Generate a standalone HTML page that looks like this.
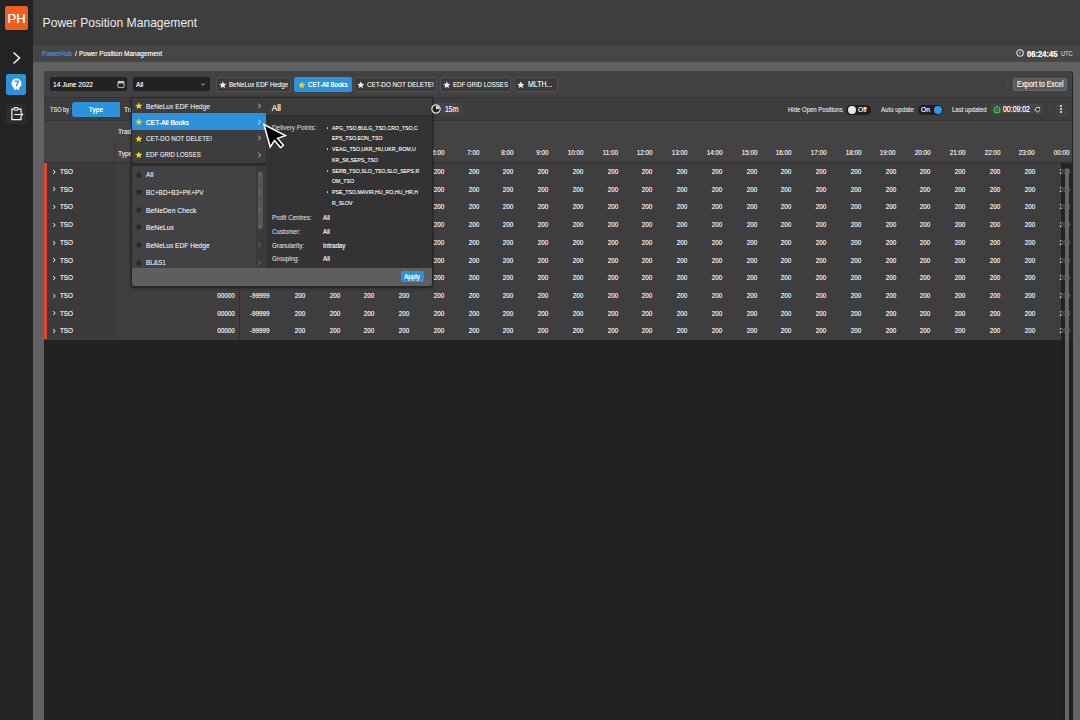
<!DOCTYPE html>
<html><head><meta charset="utf-8">
<style>
*{margin:0;padding:0;box-sizing:border-box}
html,body{width:1080px;height:720px;overflow:hidden;background:#232323;font-family:"Liberation Sans",sans-serif;color:#e6e6e6}
.a{position:absolute}
.t{position:absolute;white-space:nowrap;line-height:1;text-shadow:0 0 0.25px}
</style></head><body>
<div class="a" style="left:0px;top:0px;width:33px;height:720px;background:#232323;"></div>
<div class="a" style="left:33px;top:0px;width:1047px;height:44px;background:#3e3e3e;"></div>
<div class="a" style="left:33px;top:44px;width:1047px;height:18px;background:#474647;"></div>
<div class="a" style="left:33px;top:44px;width:1047px;height:1px;background:#3a3a3a;"></div>
<div class="a" style="left:33px;top:62px;width:1047px;height:658px;background:#626262;"></div>
<div class="a" style="left:44px;top:71px;width:1029px;height:649px;background:#222222;border-radius:3px 3px 0 0"></div>
<div class="a" style="left:44px;top:71px;width:1028px;height:26px;background:#434243;border-radius:3px 3px 0 0"></div>
<div class="a" style="left:44px;top:97px;width:1028px;height:24px;background:#3d3d3d;"></div>
<div class="a" style="left:44px;top:97px;width:1028px;height:1px;background:#343434;"></div>
<div class="a" style="left:44px;top:120px;width:1028px;height:1px;background:#343434;"></div>
<div class="a" style="left:44px;top:121px;width:1028px;height:42px;background:#444344;"></div>
<div class="a" style="left:44px;top:162px;width:1028px;height:1.6px;background:#323232;"></div>
<div class="a" style="left:44px;top:163px;width:1017px;height:176.5px;background:#3e3e3e;"></div>
<div class="a" style="left:47px;top:163px;width:67px;height:176.5px;background:#3b3b3b;"></div>
<div class="a" style="left:5px;top:6px;width:23px;height:24px;background:#f35d1f;border-radius:2px;box-shadow:0 0 0 1px #18232a"></div>
<div class="t" style="left:-33.50px;width:100px;top:12.00px;text-align:center;transform-origin:50% 0;font-size:13.00px;color:#ffffff;">PH</div>
<svg class="a" style="left:11px;top:51px" width="11" height="14" viewBox="0 0 11 14"><path d="M2.5 1.5 L8.5 7 L2.5 12.5" fill="none" stroke="#f0f0f0" stroke-width="1.6"/></svg>
<div class="a" style="left:6px;top:74px;width:20px;height:21px;background:#2b92db;border-radius:2px"></div>
<svg class="a" style="left:10px;top:77px" width="13" height="15" viewBox="0 0 13 15"><circle cx="6.5" cy="6.5" r="5" fill="#fff"/><path d="M3.5 10 L4.5 13.5 L6.5 11.5 L8.5 13.5 L9.5 10Z" fill="#fff"/><path d="M4.6 4.2 H8.4 L6.2 9.2" fill="none" stroke="#2d8fd6" stroke-width="1.3"/></svg>
<div class="a" style="left:6px;top:104px;width:20px;height:20px;background:#2c2c2c;border-radius:2px"></div>
<svg class="a" style="left:0px;top:100px" width="33" height="30" viewBox="0 100 33 30"><path d="M14 109.2 H11.9 V119.5 H21 V116.6 M21 112.4 V109.2 H18" fill="none" stroke="#f2f2f2" stroke-width="1.25"/><rect x="14.2" y="107.6" width="3.6" height="2.6" rx="0.6" fill="none" stroke="#f2f2f2" stroke-width="1.1"/><path d="M14.2 114.5 H22.6 M20.8 112.7 L22.7 114.5 L20.8 116.3" fill="none" stroke="#f2f2f2" stroke-width="1.15"/></svg>
<div class="t" style="left:42.60px;top:17.00px;transform-origin:0 0;font-size:12.10px;color:#ececec;text-shadow:none">Power Position Management</div>
<div class="t" style="left:41.60px;top:50.00px;transform:scaleX(0.8475);transform-origin:0 0;font-size:7.55px;color:#3d8fd1;">PowerHub</div>
<div class="t" style="left:74.50px;top:50.00px;transform:scaleX(0.8475);transform-origin:0 0;font-size:7.67px;color:#e6e6e6;">/</div>
<div class="t" style="left:79.00px;top:50.00px;transform:scaleX(0.8475);transform-origin:0 0;font-size:7.67px;color:#e6e6e6;">Power Position Management</div>
<svg class="a" style="left:1015px;top:48px" width="10" height="10" viewBox="0 0 10 10"><circle cx="5" cy="5" r="3.2" fill="none" stroke="#e4e4e4" stroke-width="1.1"/><path d="M5 3.4 V5.1 L4.2 5.9" fill="none" stroke="#e4e4e4" stroke-width="0.8"/></svg>
<div class="t" style="left:1027.00px;top:50.00px;transform:scaleX(0.8929);transform-origin:0 0;font-size:8.53px;color:#f2f2f2;font-weight:bold">06:24:45</div>
<div class="t" style="left:1061.00px;top:51.00px;transform:scaleX(0.8475);transform-origin:0 0;font-size:6.60px;color:#bdbdbd;">UTC</div>
<div class="a" style="left:50px;top:77px;width:77px;height:14px;background:#222222;border-radius:2px"></div>
<div class="t" style="left:53.00px;top:81.00px;transform:scaleX(0.8475);transform-origin:0 0;font-size:7.79px;color:#e0e0e0;">14 June 2022</div>
<svg class="a" style="left:116.5px;top:80px" width="8" height="9" viewBox="0 0 8 9"><rect x="0.9" y="1.6" width="6.2" height="6" rx="0.8" fill="none" stroke="#cfcfcf" stroke-width="0.9"/><rect x="0.9" y="1.6" width="6.2" height="1.8" fill="#cfcfcf"/><path d="M2.5 0.6 V2.2 M5.5 0.6 V2.2" stroke="#cfcfcf" stroke-width="0.8"/></svg>
<div class="a" style="left:132.5px;top:77px;width:77px;height:14px;background:#222222;border-radius:2px"></div>
<div class="t" style="left:136.00px;top:81.00px;transform:scaleX(0.8475);transform-origin:0 0;font-size:7.79px;color:#e0e0e0;">All</div>
<svg class="a" style="left:199.5px;top:81.5px" width="6" height="5" viewBox="0 0 6 5"><path d="M1.3 1.5 L3 3.2 L4.7 1.5" fill="none" stroke="#d0d0d0" stroke-width="0.9"/></svg>
<div class="a" style="left:215.5px;top:77px;width:75.5px;height:15px;background:#3b3b3b;border-radius:2px;border:1px solid #525252"></div>
<svg class="a" style="left:218.60px;top:80.60px" width="7.60" height="7.60" viewBox="0 0 8 8"><path d="M4 0.3 L5.05 2.9 L7.8 3.05 L5.7 4.8 L6.35 7.5 L4 6 L1.65 7.5 L2.3 4.8 L0.2 3.05 L2.95 2.9Z" fill="#f0f0f0"/></svg>
<div class="t" style="left:228.80px;top:81.00px;transform:scaleX(0.8475);transform-origin:0 0;font-size:7.28px;color:#dadada;">BeNeLux EDF Hedge</div>
<div class="a" style="left:294px;top:77px;width:57.69999999999999px;height:15px;background:#2b92db;border-radius:2px"></div>
<svg class="a" style="left:297.50px;top:80.60px" width="7.60" height="7.60" viewBox="0 0 8 8"><path d="M4 0.3 L5.05 2.9 L7.8 3.05 L5.7 4.8 L6.35 7.5 L4 6 L1.65 7.5 L2.3 4.8 L0.2 3.05 L2.95 2.9Z" fill="#f5d21e"/></svg>
<div class="t" style="left:308.20px;top:81.00px;transform:scaleX(0.8475);transform-origin:0 0;font-size:7.23px;color:#ffffff;">CET-All Books</div>
<div class="a" style="left:354px;top:77px;width:82.69999999999999px;height:15px;background:#3b3b3b;border-radius:2px;border:1px solid #525252"></div>
<svg class="a" style="left:357.10px;top:80.60px" width="7.60" height="7.60" viewBox="0 0 8 8"><path d="M4 0.3 L5.05 2.9 L7.8 3.05 L5.7 4.8 L6.35 7.5 L4 6 L1.65 7.5 L2.3 4.8 L0.2 3.05 L2.95 2.9Z" fill="#f0f0f0"/></svg>
<div class="t" style="left:367.30px;top:81.00px;transform:scaleX(0.8475);transform-origin:0 0;font-size:7.45px;color:#dadada;">CET-DO NOT DELETE!</div>
<div class="a" style="left:440px;top:77px;width:71px;height:15px;background:#3b3b3b;border-radius:2px;border:1px solid #525252"></div>
<svg class="a" style="left:443.10px;top:80.60px" width="7.60" height="7.60" viewBox="0 0 8 8"><path d="M4 0.3 L5.05 2.9 L7.8 3.05 L5.7 4.8 L6.35 7.5 L4 6 L1.65 7.5 L2.3 4.8 L0.2 3.05 L2.95 2.9Z" fill="#f0f0f0"/></svg>
<div class="t" style="left:453.30px;top:82.00px;transform:scaleX(0.8475);transform-origin:0 0;font-size:7.17px;color:#dadada;">EDF GRID LOSSES</div>
<div class="a" style="left:514.3px;top:77px;width:43.40000000000009px;height:15px;background:#3b3b3b;border-radius:2px;border:1px solid #525252"></div>
<svg class="a" style="left:517.40px;top:80.60px" width="7.60" height="7.60" viewBox="0 0 8 8"><path d="M4 0.3 L5.05 2.9 L7.8 3.05 L5.7 4.8 L6.35 7.5 L4 6 L1.65 7.5 L2.3 4.8 L0.2 3.05 L2.95 2.9Z" fill="#f0f0f0"/></svg>
<div class="t" style="left:527.60px;top:81.00px;transform:scaleX(0.8475);transform-origin:0 0;font-size:8.24px;color:#dadada;">MLTH...</div>
<div class="a" style="left:1007px;top:79px;width:1px;height:11px;background:#4a4a4a;"></div>
<div class="a" style="left:1013px;top:77.5px;width:53.5px;height:13.5px;background:#5a5a5a;border-radius:2px;border:1px solid #686868"></div>
<div class="t" style="left:1016.50px;top:81.00px;transform:scaleX(0.8475);transform-origin:0 0;font-size:8.20px;color:#e4e4e4;">Export to Excel</div>
<div class="t" style="left:50.00px;top:106.00px;transform:scaleX(0.8000);transform-origin:0 0;font-size:7.00px;color:#d0d0d0;">TSO by</div>
<div class="a" style="left:72.2px;top:102.2px;width:48px;height:14.5px;background:#2b92db;border-radius:3px 0 0 3px"></div>
<div class="t" style="left:46.20px;width:100px;top:106.00px;text-align:center;transform:scaleX(0.8475);transform-origin:50% 0;font-size:7.79px;color:#ffffff;">Type</div>
<div class="t" style="left:124.00px;top:106.00px;transform:scaleX(0.8475);transform-origin:0 0;font-size:7.79px;color:#d0d0d0;">Trade</div>
<div class="a" style="left:433px;top:102.8px;width:30px;height:12.7px;background:#444444;border-radius:2px"></div>
<div class="t" style="left:444.70px;top:106.00px;transform:scaleX(0.8475);transform-origin:0 0;font-size:8.14px;color:#e0e0e0;">15m</div>
<div class="t" style="left:788.00px;top:107.00px;transform:scaleX(0.8475);transform-origin:0 0;font-size:7.08px;color:#cfcfcf;">Hide Open Positions</div>
<div class="a" style="left:846px;top:104.8px;width:25.4px;height:10px;background:#1f1f1f;border-radius:5px"></div>
<div class="a" style="left:848px;top:105.8px;width:8px;height:8px;border-radius:50%;background:#e8e8e8"></div>
<div class="t" style="left:858.00px;top:106.00px;transform:scaleX(0.8475);transform-origin:0 0;font-size:7.79px;color:#f0f0f0;">Off</div>
<div class="t" style="left:881.00px;top:106.00px;transform:scaleX(0.8475);transform-origin:0 0;font-size:7.20px;color:#cfcfcf;">Auto update</div>
<div class="a" style="left:917.8px;top:104.8px;width:25.1px;height:10px;background:#1f1f1f;border-radius:5px"></div>
<div class="a" style="left:933.6px;top:105.8px;width:8px;height:8px;border-radius:50%;background:#2d9ae8"></div>
<div class="t" style="left:921.00px;top:106.00px;transform:scaleX(0.8475);transform-origin:0 0;font-size:7.79px;color:#f0f0f0;">On</div>
<div class="t" style="left:952.40px;top:106.00px;transform:scaleX(0.8475);transform-origin:0 0;font-size:7.06px;color:#cfcfcf;">Last updated</div>
<div class="a" style="left:990.6px;top:103.8px;width:52.4px;height:10.6px;background:#454545;border-radius:2px"></div>
<svg class="a" style="left:992px;top:104px" width="10" height="11" viewBox="0 0 10 11"><circle cx="5" cy="5.9" r="2.9" fill="none" stroke="#52c23e" stroke-width="1.1"/><path d="M5 1.6 V3" stroke="#52c23e" stroke-width="1.1"/><path d="M4.3 4.6 L6.4 5.9 L4.3 7.2Z" fill="#52c23e"/></svg>
<div class="t" style="left:1003.00px;top:106.00px;transform:scaleX(0.8475);transform-origin:0 0;font-size:8.19px;color:#f2f2f2;text-shadow:0 0 0.4px">00:09:02</div>
<svg class="a" style="left:1034px;top:106px" width="7" height="7" viewBox="0 0 7 7"><path d="M5.3 2.1 A2.3 2.3 0 1 0 5.8 4.1" fill="none" stroke="#e0e0e0" stroke-width="1"/><path d="M4.3 1 L6.2 1.1 L5.9 3Z" fill="#e0e0e0"/></svg>
<div class="a" style="left:1049px;top:104px;width:1px;height:10px;background:#474747;"></div>
<div class="a" style="left:1056px;top:103px;width:11px;height:13px;background:#424242;border-radius:2px"></div>
<div class="a" style="left:1060.3px;top:105.3px;width:1.8px;height:1.8px;border-radius:50%;background:#f0f0f0"></div>
<div class="a" style="left:1060.3px;top:108.3px;width:1.8px;height:1.8px;border-radius:50%;background:#f0f0f0"></div>
<div class="a" style="left:1060.3px;top:111.3px;width:1.8px;height:1.8px;border-radius:50%;background:#f0f0f0"></div>
<div class="t" style="left:117.80px;top:128.00px;transform:scaleX(0.8475);transform-origin:0 0;font-size:7.79px;color:#d6d6d6;">Trade</div>
<div class="t" style="left:117.80px;top:150.00px;transform:scaleX(0.8475);transform-origin:0 0;font-size:7.79px;color:#d6d6d6;">Type</div>
<div class="a" style="left:114px;top:140.5px;width:1px;height:22px;background:#383838;"></div>
<div class="t" style="right:774.55px;top:149.00px;text-align:right;transform:scaleX(0.8475);transform-origin:100% 0;font-size:7.43px;color:#e2e2e2;">2:00</div>
<div class="t" style="right:739.81px;top:149.00px;text-align:right;transform:scaleX(0.8475);transform-origin:100% 0;font-size:7.43px;color:#e2e2e2;">3:00</div>
<div class="t" style="right:705.07px;top:149.00px;text-align:right;transform:scaleX(0.8475);transform-origin:100% 0;font-size:7.43px;color:#e2e2e2;">4:00</div>
<div class="t" style="right:670.33px;top:149.00px;text-align:right;transform:scaleX(0.8475);transform-origin:100% 0;font-size:7.43px;color:#e2e2e2;">5:00</div>
<div class="t" style="right:635.59px;top:149.00px;text-align:right;transform:scaleX(0.8475);transform-origin:100% 0;font-size:7.43px;color:#e2e2e2;">6:00</div>
<div class="t" style="right:600.85px;top:149.00px;text-align:right;transform:scaleX(0.8475);transform-origin:100% 0;font-size:7.43px;color:#e2e2e2;">7:00</div>
<div class="t" style="right:566.11px;top:149.00px;text-align:right;transform:scaleX(0.8475);transform-origin:100% 0;font-size:7.43px;color:#e2e2e2;">8:00</div>
<div class="t" style="right:531.37px;top:149.00px;text-align:right;transform:scaleX(0.8475);transform-origin:100% 0;font-size:7.43px;color:#e2e2e2;">9:00</div>
<div class="t" style="right:496.63px;top:149.00px;text-align:right;transform:scaleX(0.8475);transform-origin:100% 0;font-size:7.43px;color:#e2e2e2;">10:00</div>
<div class="t" style="right:461.89px;top:149.00px;text-align:right;transform:scaleX(0.8475);transform-origin:100% 0;font-size:7.43px;color:#e2e2e2;">11:00</div>
<div class="t" style="right:427.15px;top:149.00px;text-align:right;transform:scaleX(0.8475);transform-origin:100% 0;font-size:7.43px;color:#e2e2e2;">12:00</div>
<div class="t" style="right:392.41px;top:149.00px;text-align:right;transform:scaleX(0.8475);transform-origin:100% 0;font-size:7.43px;color:#e2e2e2;">13:00</div>
<div class="t" style="right:357.67px;top:149.00px;text-align:right;transform:scaleX(0.8475);transform-origin:100% 0;font-size:7.43px;color:#e2e2e2;">14:00</div>
<div class="t" style="right:322.93px;top:149.00px;text-align:right;transform:scaleX(0.8475);transform-origin:100% 0;font-size:7.43px;color:#e2e2e2;">15:00</div>
<div class="t" style="right:288.19px;top:149.00px;text-align:right;transform:scaleX(0.8475);transform-origin:100% 0;font-size:7.43px;color:#e2e2e2;">16:00</div>
<div class="t" style="right:253.45px;top:149.00px;text-align:right;transform:scaleX(0.8475);transform-origin:100% 0;font-size:7.43px;color:#e2e2e2;">17:00</div>
<div class="t" style="right:218.71px;top:149.00px;text-align:right;transform:scaleX(0.8475);transform-origin:100% 0;font-size:7.43px;color:#e2e2e2;">18:00</div>
<div class="t" style="right:183.97px;top:149.00px;text-align:right;transform:scaleX(0.8475);transform-origin:100% 0;font-size:7.43px;color:#e2e2e2;">19:00</div>
<div class="t" style="right:149.23px;top:149.00px;text-align:right;transform:scaleX(0.8475);transform-origin:100% 0;font-size:7.43px;color:#e2e2e2;">20:00</div>
<div class="t" style="right:114.49px;top:149.00px;text-align:right;transform:scaleX(0.8475);transform-origin:100% 0;font-size:7.43px;color:#e2e2e2;">21:00</div>
<div class="t" style="right:79.75px;top:149.00px;text-align:right;transform:scaleX(0.8475);transform-origin:100% 0;font-size:7.43px;color:#e2e2e2;">22:00</div>
<div class="t" style="right:45.01px;top:149.00px;text-align:right;transform:scaleX(0.8475);transform-origin:100% 0;font-size:7.43px;color:#e2e2e2;">23:00</div>
<div class="t" style="right:10.27px;top:149.00px;text-align:right;transform:scaleX(0.8475);transform-origin:100% 0;font-size:7.43px;color:#e2e2e2;">00:00</div>
<div class="a" style="left:44px;top:163px;width:3px;height:176px;background:#e8432e;"></div>
<div class="a" style="left:114px;top:163px;width:1px;height:176px;background:#383838;"></div>
<div class="a" style="left:239px;top:163px;width:1px;height:176px;background:#2e2e2e;"></div>
<svg class="a" style="left:51.5px;top:168.70px" width="5" height="6" viewBox="0 0 5 6"><path d="M1.2 1 L3.2 3 L1.2 5" fill="none" stroke="#f0f0f0" stroke-width="1"/></svg>
<div class="t" style="left:60.00px;top:168.00px;transform:scaleX(0.8475);transform-origin:0 0;font-size:7.43px;color:#e6e6e6;">TSO</div>
<div class="t" style="right:845.10px;top:168.00px;text-align:right;transform:scaleX(0.8475);transform-origin:100% 0;font-size:7.43px;color:#e6e6e6;">00000</div>
<div class="t" style="left:250.10px;top:168.00px;transform:scaleX(0.8475);transform-origin:0 0;font-size:7.43px;color:#e6e6e6;">-99999</div>
<div class="t" style="left:249.80px;width:100px;top:168.00px;text-align:center;transform:scaleX(0.8475);transform-origin:50% 0;font-size:7.43px;color:#e6e6e6;">200</div>
<div class="t" style="left:284.56px;width:100px;top:168.00px;text-align:center;transform:scaleX(0.8475);transform-origin:50% 0;font-size:7.43px;color:#e6e6e6;">200</div>
<div class="t" style="left:319.32px;width:100px;top:168.00px;text-align:center;transform:scaleX(0.8475);transform-origin:50% 0;font-size:7.43px;color:#e6e6e6;">200</div>
<div class="t" style="left:354.08px;width:100px;top:168.00px;text-align:center;transform:scaleX(0.8475);transform-origin:50% 0;font-size:7.43px;color:#e6e6e6;">200</div>
<div class="t" style="left:388.84px;width:100px;top:168.00px;text-align:center;transform:scaleX(0.8475);transform-origin:50% 0;font-size:7.43px;color:#e6e6e6;">200</div>
<div class="t" style="left:423.60px;width:100px;top:168.00px;text-align:center;transform:scaleX(0.8475);transform-origin:50% 0;font-size:7.43px;color:#e6e6e6;">200</div>
<div class="t" style="left:458.36px;width:100px;top:168.00px;text-align:center;transform:scaleX(0.8475);transform-origin:50% 0;font-size:7.43px;color:#e6e6e6;">200</div>
<div class="t" style="left:493.12px;width:100px;top:168.00px;text-align:center;transform:scaleX(0.8475);transform-origin:50% 0;font-size:7.43px;color:#e6e6e6;">200</div>
<div class="t" style="left:527.88px;width:100px;top:168.00px;text-align:center;transform:scaleX(0.8475);transform-origin:50% 0;font-size:7.43px;color:#e6e6e6;">200</div>
<div class="t" style="left:562.64px;width:100px;top:168.00px;text-align:center;transform:scaleX(0.8475);transform-origin:50% 0;font-size:7.43px;color:#e6e6e6;">200</div>
<div class="t" style="left:597.40px;width:100px;top:168.00px;text-align:center;transform:scaleX(0.8475);transform-origin:50% 0;font-size:7.43px;color:#e6e6e6;">200</div>
<div class="t" style="left:632.16px;width:100px;top:168.00px;text-align:center;transform:scaleX(0.8475);transform-origin:50% 0;font-size:7.43px;color:#e6e6e6;">200</div>
<div class="t" style="left:666.92px;width:100px;top:168.00px;text-align:center;transform:scaleX(0.8475);transform-origin:50% 0;font-size:7.43px;color:#e6e6e6;">200</div>
<div class="t" style="left:701.68px;width:100px;top:168.00px;text-align:center;transform:scaleX(0.8475);transform-origin:50% 0;font-size:7.43px;color:#e6e6e6;">200</div>
<div class="t" style="left:736.44px;width:100px;top:168.00px;text-align:center;transform:scaleX(0.8475);transform-origin:50% 0;font-size:7.43px;color:#e6e6e6;">200</div>
<div class="t" style="left:771.20px;width:100px;top:168.00px;text-align:center;transform:scaleX(0.8475);transform-origin:50% 0;font-size:7.43px;color:#e6e6e6;">200</div>
<div class="t" style="left:805.96px;width:100px;top:168.00px;text-align:center;transform:scaleX(0.8475);transform-origin:50% 0;font-size:7.43px;color:#e6e6e6;">200</div>
<div class="t" style="left:840.72px;width:100px;top:168.00px;text-align:center;transform:scaleX(0.8475);transform-origin:50% 0;font-size:7.43px;color:#e6e6e6;">200</div>
<div class="t" style="left:875.48px;width:100px;top:168.00px;text-align:center;transform:scaleX(0.8475);transform-origin:50% 0;font-size:7.43px;color:#e6e6e6;">200</div>
<div class="t" style="left:910.24px;width:100px;top:168.00px;text-align:center;transform:scaleX(0.8475);transform-origin:50% 0;font-size:7.43px;color:#e6e6e6;">200</div>
<div class="t" style="left:945.00px;width:100px;top:168.00px;text-align:center;transform:scaleX(0.8475);transform-origin:50% 0;font-size:7.43px;color:#e6e6e6;">200</div>
<div class="t" style="left:979.76px;width:100px;top:168.00px;text-align:center;transform:scaleX(0.8475);transform-origin:50% 0;font-size:7.43px;color:#e6e6e6;">200</div>
<div class="t" style="left:1014.52px;width:100px;top:168.00px;text-align:center;transform:scaleX(0.8475);transform-origin:50% 0;font-size:7.43px;color:#e6e6e6;">200</div>
<svg class="a" style="left:51.5px;top:186.42px" width="5" height="6" viewBox="0 0 5 6"><path d="M1.2 1 L3.2 3 L1.2 5" fill="none" stroke="#f0f0f0" stroke-width="1"/></svg>
<div class="t" style="left:60.00px;top:186.00px;transform:scaleX(0.8475);transform-origin:0 0;font-size:7.43px;color:#e6e6e6;">TSO</div>
<div class="t" style="right:845.10px;top:186.00px;text-align:right;transform:scaleX(0.8475);transform-origin:100% 0;font-size:7.43px;color:#e6e6e6;">00000</div>
<div class="t" style="left:250.10px;top:186.00px;transform:scaleX(0.8475);transform-origin:0 0;font-size:7.43px;color:#e6e6e6;">-99999</div>
<div class="t" style="left:249.80px;width:100px;top:186.00px;text-align:center;transform:scaleX(0.8475);transform-origin:50% 0;font-size:7.43px;color:#e6e6e6;">200</div>
<div class="t" style="left:284.56px;width:100px;top:186.00px;text-align:center;transform:scaleX(0.8475);transform-origin:50% 0;font-size:7.43px;color:#e6e6e6;">200</div>
<div class="t" style="left:319.32px;width:100px;top:186.00px;text-align:center;transform:scaleX(0.8475);transform-origin:50% 0;font-size:7.43px;color:#e6e6e6;">200</div>
<div class="t" style="left:354.08px;width:100px;top:186.00px;text-align:center;transform:scaleX(0.8475);transform-origin:50% 0;font-size:7.43px;color:#e6e6e6;">200</div>
<div class="t" style="left:388.84px;width:100px;top:186.00px;text-align:center;transform:scaleX(0.8475);transform-origin:50% 0;font-size:7.43px;color:#e6e6e6;">200</div>
<div class="t" style="left:423.60px;width:100px;top:186.00px;text-align:center;transform:scaleX(0.8475);transform-origin:50% 0;font-size:7.43px;color:#e6e6e6;">200</div>
<div class="t" style="left:458.36px;width:100px;top:186.00px;text-align:center;transform:scaleX(0.8475);transform-origin:50% 0;font-size:7.43px;color:#e6e6e6;">200</div>
<div class="t" style="left:493.12px;width:100px;top:186.00px;text-align:center;transform:scaleX(0.8475);transform-origin:50% 0;font-size:7.43px;color:#e6e6e6;">200</div>
<div class="t" style="left:527.88px;width:100px;top:186.00px;text-align:center;transform:scaleX(0.8475);transform-origin:50% 0;font-size:7.43px;color:#e6e6e6;">200</div>
<div class="t" style="left:562.64px;width:100px;top:186.00px;text-align:center;transform:scaleX(0.8475);transform-origin:50% 0;font-size:7.43px;color:#e6e6e6;">200</div>
<div class="t" style="left:597.40px;width:100px;top:186.00px;text-align:center;transform:scaleX(0.8475);transform-origin:50% 0;font-size:7.43px;color:#e6e6e6;">200</div>
<div class="t" style="left:632.16px;width:100px;top:186.00px;text-align:center;transform:scaleX(0.8475);transform-origin:50% 0;font-size:7.43px;color:#e6e6e6;">200</div>
<div class="t" style="left:666.92px;width:100px;top:186.00px;text-align:center;transform:scaleX(0.8475);transform-origin:50% 0;font-size:7.43px;color:#e6e6e6;">200</div>
<div class="t" style="left:701.68px;width:100px;top:186.00px;text-align:center;transform:scaleX(0.8475);transform-origin:50% 0;font-size:7.43px;color:#e6e6e6;">200</div>
<div class="t" style="left:736.44px;width:100px;top:186.00px;text-align:center;transform:scaleX(0.8475);transform-origin:50% 0;font-size:7.43px;color:#e6e6e6;">200</div>
<div class="t" style="left:771.20px;width:100px;top:186.00px;text-align:center;transform:scaleX(0.8475);transform-origin:50% 0;font-size:7.43px;color:#e6e6e6;">200</div>
<div class="t" style="left:805.96px;width:100px;top:186.00px;text-align:center;transform:scaleX(0.8475);transform-origin:50% 0;font-size:7.43px;color:#e6e6e6;">200</div>
<div class="t" style="left:840.72px;width:100px;top:186.00px;text-align:center;transform:scaleX(0.8475);transform-origin:50% 0;font-size:7.43px;color:#e6e6e6;">200</div>
<div class="t" style="left:875.48px;width:100px;top:186.00px;text-align:center;transform:scaleX(0.8475);transform-origin:50% 0;font-size:7.43px;color:#e6e6e6;">200</div>
<div class="t" style="left:910.24px;width:100px;top:186.00px;text-align:center;transform:scaleX(0.8475);transform-origin:50% 0;font-size:7.43px;color:#e6e6e6;">200</div>
<div class="t" style="left:945.00px;width:100px;top:186.00px;text-align:center;transform:scaleX(0.8475);transform-origin:50% 0;font-size:7.43px;color:#e6e6e6;">200</div>
<div class="t" style="left:979.76px;width:100px;top:186.00px;text-align:center;transform:scaleX(0.8475);transform-origin:50% 0;font-size:7.43px;color:#e6e6e6;">200</div>
<div class="t" style="left:1014.52px;width:100px;top:186.00px;text-align:center;transform:scaleX(0.8475);transform-origin:50% 0;font-size:7.43px;color:#e6e6e6;">200</div>
<svg class="a" style="left:51.5px;top:204.14px" width="5" height="6" viewBox="0 0 5 6"><path d="M1.2 1 L3.2 3 L1.2 5" fill="none" stroke="#f0f0f0" stroke-width="1"/></svg>
<div class="t" style="left:60.00px;top:203.00px;transform:scaleX(0.8475);transform-origin:0 0;font-size:7.43px;color:#e6e6e6;">TSO</div>
<div class="t" style="right:845.10px;top:203.00px;text-align:right;transform:scaleX(0.8475);transform-origin:100% 0;font-size:7.43px;color:#e6e6e6;">00000</div>
<div class="t" style="left:250.10px;top:203.00px;transform:scaleX(0.8475);transform-origin:0 0;font-size:7.43px;color:#e6e6e6;">-99999</div>
<div class="t" style="left:249.80px;width:100px;top:203.00px;text-align:center;transform:scaleX(0.8475);transform-origin:50% 0;font-size:7.43px;color:#e6e6e6;">200</div>
<div class="t" style="left:284.56px;width:100px;top:203.00px;text-align:center;transform:scaleX(0.8475);transform-origin:50% 0;font-size:7.43px;color:#e6e6e6;">200</div>
<div class="t" style="left:319.32px;width:100px;top:203.00px;text-align:center;transform:scaleX(0.8475);transform-origin:50% 0;font-size:7.43px;color:#e6e6e6;">200</div>
<div class="t" style="left:354.08px;width:100px;top:203.00px;text-align:center;transform:scaleX(0.8475);transform-origin:50% 0;font-size:7.43px;color:#e6e6e6;">200</div>
<div class="t" style="left:388.84px;width:100px;top:203.00px;text-align:center;transform:scaleX(0.8475);transform-origin:50% 0;font-size:7.43px;color:#e6e6e6;">200</div>
<div class="t" style="left:423.60px;width:100px;top:203.00px;text-align:center;transform:scaleX(0.8475);transform-origin:50% 0;font-size:7.43px;color:#e6e6e6;">200</div>
<div class="t" style="left:458.36px;width:100px;top:203.00px;text-align:center;transform:scaleX(0.8475);transform-origin:50% 0;font-size:7.43px;color:#e6e6e6;">200</div>
<div class="t" style="left:493.12px;width:100px;top:203.00px;text-align:center;transform:scaleX(0.8475);transform-origin:50% 0;font-size:7.43px;color:#e6e6e6;">200</div>
<div class="t" style="left:527.88px;width:100px;top:203.00px;text-align:center;transform:scaleX(0.8475);transform-origin:50% 0;font-size:7.43px;color:#e6e6e6;">200</div>
<div class="t" style="left:562.64px;width:100px;top:203.00px;text-align:center;transform:scaleX(0.8475);transform-origin:50% 0;font-size:7.43px;color:#e6e6e6;">200</div>
<div class="t" style="left:597.40px;width:100px;top:203.00px;text-align:center;transform:scaleX(0.8475);transform-origin:50% 0;font-size:7.43px;color:#e6e6e6;">200</div>
<div class="t" style="left:632.16px;width:100px;top:203.00px;text-align:center;transform:scaleX(0.8475);transform-origin:50% 0;font-size:7.43px;color:#e6e6e6;">200</div>
<div class="t" style="left:666.92px;width:100px;top:203.00px;text-align:center;transform:scaleX(0.8475);transform-origin:50% 0;font-size:7.43px;color:#e6e6e6;">200</div>
<div class="t" style="left:701.68px;width:100px;top:203.00px;text-align:center;transform:scaleX(0.8475);transform-origin:50% 0;font-size:7.43px;color:#e6e6e6;">200</div>
<div class="t" style="left:736.44px;width:100px;top:203.00px;text-align:center;transform:scaleX(0.8475);transform-origin:50% 0;font-size:7.43px;color:#e6e6e6;">200</div>
<div class="t" style="left:771.20px;width:100px;top:203.00px;text-align:center;transform:scaleX(0.8475);transform-origin:50% 0;font-size:7.43px;color:#e6e6e6;">200</div>
<div class="t" style="left:805.96px;width:100px;top:203.00px;text-align:center;transform:scaleX(0.8475);transform-origin:50% 0;font-size:7.43px;color:#e6e6e6;">200</div>
<div class="t" style="left:840.72px;width:100px;top:203.00px;text-align:center;transform:scaleX(0.8475);transform-origin:50% 0;font-size:7.43px;color:#e6e6e6;">200</div>
<div class="t" style="left:875.48px;width:100px;top:203.00px;text-align:center;transform:scaleX(0.8475);transform-origin:50% 0;font-size:7.43px;color:#e6e6e6;">200</div>
<div class="t" style="left:910.24px;width:100px;top:203.00px;text-align:center;transform:scaleX(0.8475);transform-origin:50% 0;font-size:7.43px;color:#e6e6e6;">200</div>
<div class="t" style="left:945.00px;width:100px;top:203.00px;text-align:center;transform:scaleX(0.8475);transform-origin:50% 0;font-size:7.43px;color:#e6e6e6;">200</div>
<div class="t" style="left:979.76px;width:100px;top:203.00px;text-align:center;transform:scaleX(0.8475);transform-origin:50% 0;font-size:7.43px;color:#e6e6e6;">200</div>
<div class="t" style="left:1014.52px;width:100px;top:203.00px;text-align:center;transform:scaleX(0.8475);transform-origin:50% 0;font-size:7.43px;color:#e6e6e6;">200</div>
<svg class="a" style="left:51.5px;top:221.86px" width="5" height="6" viewBox="0 0 5 6"><path d="M1.2 1 L3.2 3 L1.2 5" fill="none" stroke="#f0f0f0" stroke-width="1"/></svg>
<div class="t" style="left:60.00px;top:221.00px;transform:scaleX(0.8475);transform-origin:0 0;font-size:7.43px;color:#e6e6e6;">TSO</div>
<div class="t" style="right:845.10px;top:221.00px;text-align:right;transform:scaleX(0.8475);transform-origin:100% 0;font-size:7.43px;color:#e6e6e6;">00000</div>
<div class="t" style="left:250.10px;top:221.00px;transform:scaleX(0.8475);transform-origin:0 0;font-size:7.43px;color:#e6e6e6;">-99999</div>
<div class="t" style="left:249.80px;width:100px;top:221.00px;text-align:center;transform:scaleX(0.8475);transform-origin:50% 0;font-size:7.43px;color:#e6e6e6;">200</div>
<div class="t" style="left:284.56px;width:100px;top:221.00px;text-align:center;transform:scaleX(0.8475);transform-origin:50% 0;font-size:7.43px;color:#e6e6e6;">200</div>
<div class="t" style="left:319.32px;width:100px;top:221.00px;text-align:center;transform:scaleX(0.8475);transform-origin:50% 0;font-size:7.43px;color:#e6e6e6;">200</div>
<div class="t" style="left:354.08px;width:100px;top:221.00px;text-align:center;transform:scaleX(0.8475);transform-origin:50% 0;font-size:7.43px;color:#e6e6e6;">200</div>
<div class="t" style="left:388.84px;width:100px;top:221.00px;text-align:center;transform:scaleX(0.8475);transform-origin:50% 0;font-size:7.43px;color:#e6e6e6;">200</div>
<div class="t" style="left:423.60px;width:100px;top:221.00px;text-align:center;transform:scaleX(0.8475);transform-origin:50% 0;font-size:7.43px;color:#e6e6e6;">200</div>
<div class="t" style="left:458.36px;width:100px;top:221.00px;text-align:center;transform:scaleX(0.8475);transform-origin:50% 0;font-size:7.43px;color:#e6e6e6;">200</div>
<div class="t" style="left:493.12px;width:100px;top:221.00px;text-align:center;transform:scaleX(0.8475);transform-origin:50% 0;font-size:7.43px;color:#e6e6e6;">200</div>
<div class="t" style="left:527.88px;width:100px;top:221.00px;text-align:center;transform:scaleX(0.8475);transform-origin:50% 0;font-size:7.43px;color:#e6e6e6;">200</div>
<div class="t" style="left:562.64px;width:100px;top:221.00px;text-align:center;transform:scaleX(0.8475);transform-origin:50% 0;font-size:7.43px;color:#e6e6e6;">200</div>
<div class="t" style="left:597.40px;width:100px;top:221.00px;text-align:center;transform:scaleX(0.8475);transform-origin:50% 0;font-size:7.43px;color:#e6e6e6;">200</div>
<div class="t" style="left:632.16px;width:100px;top:221.00px;text-align:center;transform:scaleX(0.8475);transform-origin:50% 0;font-size:7.43px;color:#e6e6e6;">200</div>
<div class="t" style="left:666.92px;width:100px;top:221.00px;text-align:center;transform:scaleX(0.8475);transform-origin:50% 0;font-size:7.43px;color:#e6e6e6;">200</div>
<div class="t" style="left:701.68px;width:100px;top:221.00px;text-align:center;transform:scaleX(0.8475);transform-origin:50% 0;font-size:7.43px;color:#e6e6e6;">200</div>
<div class="t" style="left:736.44px;width:100px;top:221.00px;text-align:center;transform:scaleX(0.8475);transform-origin:50% 0;font-size:7.43px;color:#e6e6e6;">200</div>
<div class="t" style="left:771.20px;width:100px;top:221.00px;text-align:center;transform:scaleX(0.8475);transform-origin:50% 0;font-size:7.43px;color:#e6e6e6;">200</div>
<div class="t" style="left:805.96px;width:100px;top:221.00px;text-align:center;transform:scaleX(0.8475);transform-origin:50% 0;font-size:7.43px;color:#e6e6e6;">200</div>
<div class="t" style="left:840.72px;width:100px;top:221.00px;text-align:center;transform:scaleX(0.8475);transform-origin:50% 0;font-size:7.43px;color:#e6e6e6;">200</div>
<div class="t" style="left:875.48px;width:100px;top:221.00px;text-align:center;transform:scaleX(0.8475);transform-origin:50% 0;font-size:7.43px;color:#e6e6e6;">200</div>
<div class="t" style="left:910.24px;width:100px;top:221.00px;text-align:center;transform:scaleX(0.8475);transform-origin:50% 0;font-size:7.43px;color:#e6e6e6;">200</div>
<div class="t" style="left:945.00px;width:100px;top:221.00px;text-align:center;transform:scaleX(0.8475);transform-origin:50% 0;font-size:7.43px;color:#e6e6e6;">200</div>
<div class="t" style="left:979.76px;width:100px;top:221.00px;text-align:center;transform:scaleX(0.8475);transform-origin:50% 0;font-size:7.43px;color:#e6e6e6;">200</div>
<div class="t" style="left:1014.52px;width:100px;top:221.00px;text-align:center;transform:scaleX(0.8475);transform-origin:50% 0;font-size:7.43px;color:#e6e6e6;">200</div>
<svg class="a" style="left:51.5px;top:239.58px" width="5" height="6" viewBox="0 0 5 6"><path d="M1.2 1 L3.2 3 L1.2 5" fill="none" stroke="#f0f0f0" stroke-width="1"/></svg>
<div class="t" style="left:60.00px;top:239.00px;transform:scaleX(0.8475);transform-origin:0 0;font-size:7.43px;color:#e6e6e6;">TSO</div>
<div class="t" style="right:845.10px;top:239.00px;text-align:right;transform:scaleX(0.8475);transform-origin:100% 0;font-size:7.43px;color:#e6e6e6;">00000</div>
<div class="t" style="left:250.10px;top:239.00px;transform:scaleX(0.8475);transform-origin:0 0;font-size:7.43px;color:#e6e6e6;">-99999</div>
<div class="t" style="left:249.80px;width:100px;top:239.00px;text-align:center;transform:scaleX(0.8475);transform-origin:50% 0;font-size:7.43px;color:#e6e6e6;">200</div>
<div class="t" style="left:284.56px;width:100px;top:239.00px;text-align:center;transform:scaleX(0.8475);transform-origin:50% 0;font-size:7.43px;color:#e6e6e6;">200</div>
<div class="t" style="left:319.32px;width:100px;top:239.00px;text-align:center;transform:scaleX(0.8475);transform-origin:50% 0;font-size:7.43px;color:#e6e6e6;">200</div>
<div class="t" style="left:354.08px;width:100px;top:239.00px;text-align:center;transform:scaleX(0.8475);transform-origin:50% 0;font-size:7.43px;color:#e6e6e6;">200</div>
<div class="t" style="left:388.84px;width:100px;top:239.00px;text-align:center;transform:scaleX(0.8475);transform-origin:50% 0;font-size:7.43px;color:#e6e6e6;">200</div>
<div class="t" style="left:423.60px;width:100px;top:239.00px;text-align:center;transform:scaleX(0.8475);transform-origin:50% 0;font-size:7.43px;color:#e6e6e6;">200</div>
<div class="t" style="left:458.36px;width:100px;top:239.00px;text-align:center;transform:scaleX(0.8475);transform-origin:50% 0;font-size:7.43px;color:#e6e6e6;">200</div>
<div class="t" style="left:493.12px;width:100px;top:239.00px;text-align:center;transform:scaleX(0.8475);transform-origin:50% 0;font-size:7.43px;color:#e6e6e6;">200</div>
<div class="t" style="left:527.88px;width:100px;top:239.00px;text-align:center;transform:scaleX(0.8475);transform-origin:50% 0;font-size:7.43px;color:#e6e6e6;">200</div>
<div class="t" style="left:562.64px;width:100px;top:239.00px;text-align:center;transform:scaleX(0.8475);transform-origin:50% 0;font-size:7.43px;color:#e6e6e6;">200</div>
<div class="t" style="left:597.40px;width:100px;top:239.00px;text-align:center;transform:scaleX(0.8475);transform-origin:50% 0;font-size:7.43px;color:#e6e6e6;">200</div>
<div class="t" style="left:632.16px;width:100px;top:239.00px;text-align:center;transform:scaleX(0.8475);transform-origin:50% 0;font-size:7.43px;color:#e6e6e6;">200</div>
<div class="t" style="left:666.92px;width:100px;top:239.00px;text-align:center;transform:scaleX(0.8475);transform-origin:50% 0;font-size:7.43px;color:#e6e6e6;">200</div>
<div class="t" style="left:701.68px;width:100px;top:239.00px;text-align:center;transform:scaleX(0.8475);transform-origin:50% 0;font-size:7.43px;color:#e6e6e6;">200</div>
<div class="t" style="left:736.44px;width:100px;top:239.00px;text-align:center;transform:scaleX(0.8475);transform-origin:50% 0;font-size:7.43px;color:#e6e6e6;">200</div>
<div class="t" style="left:771.20px;width:100px;top:239.00px;text-align:center;transform:scaleX(0.8475);transform-origin:50% 0;font-size:7.43px;color:#e6e6e6;">200</div>
<div class="t" style="left:805.96px;width:100px;top:239.00px;text-align:center;transform:scaleX(0.8475);transform-origin:50% 0;font-size:7.43px;color:#e6e6e6;">200</div>
<div class="t" style="left:840.72px;width:100px;top:239.00px;text-align:center;transform:scaleX(0.8475);transform-origin:50% 0;font-size:7.43px;color:#e6e6e6;">200</div>
<div class="t" style="left:875.48px;width:100px;top:239.00px;text-align:center;transform:scaleX(0.8475);transform-origin:50% 0;font-size:7.43px;color:#e6e6e6;">200</div>
<div class="t" style="left:910.24px;width:100px;top:239.00px;text-align:center;transform:scaleX(0.8475);transform-origin:50% 0;font-size:7.43px;color:#e6e6e6;">200</div>
<div class="t" style="left:945.00px;width:100px;top:239.00px;text-align:center;transform:scaleX(0.8475);transform-origin:50% 0;font-size:7.43px;color:#e6e6e6;">200</div>
<div class="t" style="left:979.76px;width:100px;top:239.00px;text-align:center;transform:scaleX(0.8475);transform-origin:50% 0;font-size:7.43px;color:#e6e6e6;">200</div>
<div class="t" style="left:1014.52px;width:100px;top:239.00px;text-align:center;transform:scaleX(0.8475);transform-origin:50% 0;font-size:7.43px;color:#e6e6e6;">200</div>
<svg class="a" style="left:51.5px;top:257.30px" width="5" height="6" viewBox="0 0 5 6"><path d="M1.2 1 L3.2 3 L1.2 5" fill="none" stroke="#f0f0f0" stroke-width="1"/></svg>
<div class="t" style="left:60.00px;top:257.00px;transform:scaleX(0.8475);transform-origin:0 0;font-size:7.43px;color:#e6e6e6;">TSO</div>
<div class="t" style="right:845.10px;top:257.00px;text-align:right;transform:scaleX(0.8475);transform-origin:100% 0;font-size:7.43px;color:#e6e6e6;">00000</div>
<div class="t" style="left:250.10px;top:257.00px;transform:scaleX(0.8475);transform-origin:0 0;font-size:7.43px;color:#e6e6e6;">-99999</div>
<div class="t" style="left:249.80px;width:100px;top:257.00px;text-align:center;transform:scaleX(0.8475);transform-origin:50% 0;font-size:7.43px;color:#e6e6e6;">200</div>
<div class="t" style="left:284.56px;width:100px;top:257.00px;text-align:center;transform:scaleX(0.8475);transform-origin:50% 0;font-size:7.43px;color:#e6e6e6;">200</div>
<div class="t" style="left:319.32px;width:100px;top:257.00px;text-align:center;transform:scaleX(0.8475);transform-origin:50% 0;font-size:7.43px;color:#e6e6e6;">200</div>
<div class="t" style="left:354.08px;width:100px;top:257.00px;text-align:center;transform:scaleX(0.8475);transform-origin:50% 0;font-size:7.43px;color:#e6e6e6;">200</div>
<div class="t" style="left:388.84px;width:100px;top:257.00px;text-align:center;transform:scaleX(0.8475);transform-origin:50% 0;font-size:7.43px;color:#e6e6e6;">200</div>
<div class="t" style="left:423.60px;width:100px;top:257.00px;text-align:center;transform:scaleX(0.8475);transform-origin:50% 0;font-size:7.43px;color:#e6e6e6;">200</div>
<div class="t" style="left:458.36px;width:100px;top:257.00px;text-align:center;transform:scaleX(0.8475);transform-origin:50% 0;font-size:7.43px;color:#e6e6e6;">200</div>
<div class="t" style="left:493.12px;width:100px;top:257.00px;text-align:center;transform:scaleX(0.8475);transform-origin:50% 0;font-size:7.43px;color:#e6e6e6;">200</div>
<div class="t" style="left:527.88px;width:100px;top:257.00px;text-align:center;transform:scaleX(0.8475);transform-origin:50% 0;font-size:7.43px;color:#e6e6e6;">200</div>
<div class="t" style="left:562.64px;width:100px;top:257.00px;text-align:center;transform:scaleX(0.8475);transform-origin:50% 0;font-size:7.43px;color:#e6e6e6;">200</div>
<div class="t" style="left:597.40px;width:100px;top:257.00px;text-align:center;transform:scaleX(0.8475);transform-origin:50% 0;font-size:7.43px;color:#e6e6e6;">200</div>
<div class="t" style="left:632.16px;width:100px;top:257.00px;text-align:center;transform:scaleX(0.8475);transform-origin:50% 0;font-size:7.43px;color:#e6e6e6;">200</div>
<div class="t" style="left:666.92px;width:100px;top:257.00px;text-align:center;transform:scaleX(0.8475);transform-origin:50% 0;font-size:7.43px;color:#e6e6e6;">200</div>
<div class="t" style="left:701.68px;width:100px;top:257.00px;text-align:center;transform:scaleX(0.8475);transform-origin:50% 0;font-size:7.43px;color:#e6e6e6;">200</div>
<div class="t" style="left:736.44px;width:100px;top:257.00px;text-align:center;transform:scaleX(0.8475);transform-origin:50% 0;font-size:7.43px;color:#e6e6e6;">200</div>
<div class="t" style="left:771.20px;width:100px;top:257.00px;text-align:center;transform:scaleX(0.8475);transform-origin:50% 0;font-size:7.43px;color:#e6e6e6;">200</div>
<div class="t" style="left:805.96px;width:100px;top:257.00px;text-align:center;transform:scaleX(0.8475);transform-origin:50% 0;font-size:7.43px;color:#e6e6e6;">200</div>
<div class="t" style="left:840.72px;width:100px;top:257.00px;text-align:center;transform:scaleX(0.8475);transform-origin:50% 0;font-size:7.43px;color:#e6e6e6;">200</div>
<div class="t" style="left:875.48px;width:100px;top:257.00px;text-align:center;transform:scaleX(0.8475);transform-origin:50% 0;font-size:7.43px;color:#e6e6e6;">200</div>
<div class="t" style="left:910.24px;width:100px;top:257.00px;text-align:center;transform:scaleX(0.8475);transform-origin:50% 0;font-size:7.43px;color:#e6e6e6;">200</div>
<div class="t" style="left:945.00px;width:100px;top:257.00px;text-align:center;transform:scaleX(0.8475);transform-origin:50% 0;font-size:7.43px;color:#e6e6e6;">200</div>
<div class="t" style="left:979.76px;width:100px;top:257.00px;text-align:center;transform:scaleX(0.8475);transform-origin:50% 0;font-size:7.43px;color:#e6e6e6;">200</div>
<div class="t" style="left:1014.52px;width:100px;top:257.00px;text-align:center;transform:scaleX(0.8475);transform-origin:50% 0;font-size:7.43px;color:#e6e6e6;">200</div>
<svg class="a" style="left:51.5px;top:275.02px" width="5" height="6" viewBox="0 0 5 6"><path d="M1.2 1 L3.2 3 L1.2 5" fill="none" stroke="#f0f0f0" stroke-width="1"/></svg>
<div class="t" style="left:60.00px;top:274.00px;transform:scaleX(0.8475);transform-origin:0 0;font-size:7.43px;color:#e6e6e6;">TSO</div>
<div class="t" style="right:845.10px;top:274.00px;text-align:right;transform:scaleX(0.8475);transform-origin:100% 0;font-size:7.43px;color:#e6e6e6;">00000</div>
<div class="t" style="left:250.10px;top:274.00px;transform:scaleX(0.8475);transform-origin:0 0;font-size:7.43px;color:#e6e6e6;">-99999</div>
<div class="t" style="left:249.80px;width:100px;top:274.00px;text-align:center;transform:scaleX(0.8475);transform-origin:50% 0;font-size:7.43px;color:#e6e6e6;">200</div>
<div class="t" style="left:284.56px;width:100px;top:274.00px;text-align:center;transform:scaleX(0.8475);transform-origin:50% 0;font-size:7.43px;color:#e6e6e6;">200</div>
<div class="t" style="left:319.32px;width:100px;top:274.00px;text-align:center;transform:scaleX(0.8475);transform-origin:50% 0;font-size:7.43px;color:#e6e6e6;">200</div>
<div class="t" style="left:354.08px;width:100px;top:274.00px;text-align:center;transform:scaleX(0.8475);transform-origin:50% 0;font-size:7.43px;color:#e6e6e6;">200</div>
<div class="t" style="left:388.84px;width:100px;top:274.00px;text-align:center;transform:scaleX(0.8475);transform-origin:50% 0;font-size:7.43px;color:#e6e6e6;">200</div>
<div class="t" style="left:423.60px;width:100px;top:274.00px;text-align:center;transform:scaleX(0.8475);transform-origin:50% 0;font-size:7.43px;color:#e6e6e6;">200</div>
<div class="t" style="left:458.36px;width:100px;top:274.00px;text-align:center;transform:scaleX(0.8475);transform-origin:50% 0;font-size:7.43px;color:#e6e6e6;">200</div>
<div class="t" style="left:493.12px;width:100px;top:274.00px;text-align:center;transform:scaleX(0.8475);transform-origin:50% 0;font-size:7.43px;color:#e6e6e6;">200</div>
<div class="t" style="left:527.88px;width:100px;top:274.00px;text-align:center;transform:scaleX(0.8475);transform-origin:50% 0;font-size:7.43px;color:#e6e6e6;">200</div>
<div class="t" style="left:562.64px;width:100px;top:274.00px;text-align:center;transform:scaleX(0.8475);transform-origin:50% 0;font-size:7.43px;color:#e6e6e6;">200</div>
<div class="t" style="left:597.40px;width:100px;top:274.00px;text-align:center;transform:scaleX(0.8475);transform-origin:50% 0;font-size:7.43px;color:#e6e6e6;">200</div>
<div class="t" style="left:632.16px;width:100px;top:274.00px;text-align:center;transform:scaleX(0.8475);transform-origin:50% 0;font-size:7.43px;color:#e6e6e6;">200</div>
<div class="t" style="left:666.92px;width:100px;top:274.00px;text-align:center;transform:scaleX(0.8475);transform-origin:50% 0;font-size:7.43px;color:#e6e6e6;">200</div>
<div class="t" style="left:701.68px;width:100px;top:274.00px;text-align:center;transform:scaleX(0.8475);transform-origin:50% 0;font-size:7.43px;color:#e6e6e6;">200</div>
<div class="t" style="left:736.44px;width:100px;top:274.00px;text-align:center;transform:scaleX(0.8475);transform-origin:50% 0;font-size:7.43px;color:#e6e6e6;">200</div>
<div class="t" style="left:771.20px;width:100px;top:274.00px;text-align:center;transform:scaleX(0.8475);transform-origin:50% 0;font-size:7.43px;color:#e6e6e6;">200</div>
<div class="t" style="left:805.96px;width:100px;top:274.00px;text-align:center;transform:scaleX(0.8475);transform-origin:50% 0;font-size:7.43px;color:#e6e6e6;">200</div>
<div class="t" style="left:840.72px;width:100px;top:274.00px;text-align:center;transform:scaleX(0.8475);transform-origin:50% 0;font-size:7.43px;color:#e6e6e6;">200</div>
<div class="t" style="left:875.48px;width:100px;top:274.00px;text-align:center;transform:scaleX(0.8475);transform-origin:50% 0;font-size:7.43px;color:#e6e6e6;">200</div>
<div class="t" style="left:910.24px;width:100px;top:274.00px;text-align:center;transform:scaleX(0.8475);transform-origin:50% 0;font-size:7.43px;color:#e6e6e6;">200</div>
<div class="t" style="left:945.00px;width:100px;top:274.00px;text-align:center;transform:scaleX(0.8475);transform-origin:50% 0;font-size:7.43px;color:#e6e6e6;">200</div>
<div class="t" style="left:979.76px;width:100px;top:274.00px;text-align:center;transform:scaleX(0.8475);transform-origin:50% 0;font-size:7.43px;color:#e6e6e6;">200</div>
<div class="t" style="left:1014.52px;width:100px;top:274.00px;text-align:center;transform:scaleX(0.8475);transform-origin:50% 0;font-size:7.43px;color:#e6e6e6;">200</div>
<svg class="a" style="left:51.5px;top:292.74px" width="5" height="6" viewBox="0 0 5 6"><path d="M1.2 1 L3.2 3 L1.2 5" fill="none" stroke="#f0f0f0" stroke-width="1"/></svg>
<div class="t" style="left:60.00px;top:292.00px;transform:scaleX(0.8475);transform-origin:0 0;font-size:7.43px;color:#e6e6e6;">TSO</div>
<div class="t" style="right:845.10px;top:292.00px;text-align:right;transform:scaleX(0.8475);transform-origin:100% 0;font-size:7.43px;color:#e6e6e6;">00000</div>
<div class="t" style="left:250.10px;top:292.00px;transform:scaleX(0.8475);transform-origin:0 0;font-size:7.43px;color:#e6e6e6;">-99999</div>
<div class="t" style="left:249.80px;width:100px;top:292.00px;text-align:center;transform:scaleX(0.8475);transform-origin:50% 0;font-size:7.43px;color:#e6e6e6;">200</div>
<div class="t" style="left:284.56px;width:100px;top:292.00px;text-align:center;transform:scaleX(0.8475);transform-origin:50% 0;font-size:7.43px;color:#e6e6e6;">200</div>
<div class="t" style="left:319.32px;width:100px;top:292.00px;text-align:center;transform:scaleX(0.8475);transform-origin:50% 0;font-size:7.43px;color:#e6e6e6;">200</div>
<div class="t" style="left:354.08px;width:100px;top:292.00px;text-align:center;transform:scaleX(0.8475);transform-origin:50% 0;font-size:7.43px;color:#e6e6e6;">200</div>
<div class="t" style="left:388.84px;width:100px;top:292.00px;text-align:center;transform:scaleX(0.8475);transform-origin:50% 0;font-size:7.43px;color:#e6e6e6;">200</div>
<div class="t" style="left:423.60px;width:100px;top:292.00px;text-align:center;transform:scaleX(0.8475);transform-origin:50% 0;font-size:7.43px;color:#e6e6e6;">200</div>
<div class="t" style="left:458.36px;width:100px;top:292.00px;text-align:center;transform:scaleX(0.8475);transform-origin:50% 0;font-size:7.43px;color:#e6e6e6;">200</div>
<div class="t" style="left:493.12px;width:100px;top:292.00px;text-align:center;transform:scaleX(0.8475);transform-origin:50% 0;font-size:7.43px;color:#e6e6e6;">200</div>
<div class="t" style="left:527.88px;width:100px;top:292.00px;text-align:center;transform:scaleX(0.8475);transform-origin:50% 0;font-size:7.43px;color:#e6e6e6;">200</div>
<div class="t" style="left:562.64px;width:100px;top:292.00px;text-align:center;transform:scaleX(0.8475);transform-origin:50% 0;font-size:7.43px;color:#e6e6e6;">200</div>
<div class="t" style="left:597.40px;width:100px;top:292.00px;text-align:center;transform:scaleX(0.8475);transform-origin:50% 0;font-size:7.43px;color:#e6e6e6;">200</div>
<div class="t" style="left:632.16px;width:100px;top:292.00px;text-align:center;transform:scaleX(0.8475);transform-origin:50% 0;font-size:7.43px;color:#e6e6e6;">200</div>
<div class="t" style="left:666.92px;width:100px;top:292.00px;text-align:center;transform:scaleX(0.8475);transform-origin:50% 0;font-size:7.43px;color:#e6e6e6;">200</div>
<div class="t" style="left:701.68px;width:100px;top:292.00px;text-align:center;transform:scaleX(0.8475);transform-origin:50% 0;font-size:7.43px;color:#e6e6e6;">200</div>
<div class="t" style="left:736.44px;width:100px;top:292.00px;text-align:center;transform:scaleX(0.8475);transform-origin:50% 0;font-size:7.43px;color:#e6e6e6;">200</div>
<div class="t" style="left:771.20px;width:100px;top:292.00px;text-align:center;transform:scaleX(0.8475);transform-origin:50% 0;font-size:7.43px;color:#e6e6e6;">200</div>
<div class="t" style="left:805.96px;width:100px;top:292.00px;text-align:center;transform:scaleX(0.8475);transform-origin:50% 0;font-size:7.43px;color:#e6e6e6;">200</div>
<div class="t" style="left:840.72px;width:100px;top:292.00px;text-align:center;transform:scaleX(0.8475);transform-origin:50% 0;font-size:7.43px;color:#e6e6e6;">200</div>
<div class="t" style="left:875.48px;width:100px;top:292.00px;text-align:center;transform:scaleX(0.8475);transform-origin:50% 0;font-size:7.43px;color:#e6e6e6;">200</div>
<div class="t" style="left:910.24px;width:100px;top:292.00px;text-align:center;transform:scaleX(0.8475);transform-origin:50% 0;font-size:7.43px;color:#e6e6e6;">200</div>
<div class="t" style="left:945.00px;width:100px;top:292.00px;text-align:center;transform:scaleX(0.8475);transform-origin:50% 0;font-size:7.43px;color:#e6e6e6;">200</div>
<div class="t" style="left:979.76px;width:100px;top:292.00px;text-align:center;transform:scaleX(0.8475);transform-origin:50% 0;font-size:7.43px;color:#e6e6e6;">200</div>
<div class="t" style="left:1014.52px;width:100px;top:292.00px;text-align:center;transform:scaleX(0.8475);transform-origin:50% 0;font-size:7.43px;color:#e6e6e6;">200</div>
<svg class="a" style="left:51.5px;top:310.46px" width="5" height="6" viewBox="0 0 5 6"><path d="M1.2 1 L3.2 3 L1.2 5" fill="none" stroke="#f0f0f0" stroke-width="1"/></svg>
<div class="t" style="left:60.00px;top:310.00px;transform:scaleX(0.8475);transform-origin:0 0;font-size:7.43px;color:#e6e6e6;">TSO</div>
<div class="t" style="right:845.10px;top:310.00px;text-align:right;transform:scaleX(0.8475);transform-origin:100% 0;font-size:7.43px;color:#e6e6e6;">00000</div>
<div class="t" style="left:250.10px;top:310.00px;transform:scaleX(0.8475);transform-origin:0 0;font-size:7.43px;color:#e6e6e6;">-99999</div>
<div class="t" style="left:249.80px;width:100px;top:310.00px;text-align:center;transform:scaleX(0.8475);transform-origin:50% 0;font-size:7.43px;color:#e6e6e6;">200</div>
<div class="t" style="left:284.56px;width:100px;top:310.00px;text-align:center;transform:scaleX(0.8475);transform-origin:50% 0;font-size:7.43px;color:#e6e6e6;">200</div>
<div class="t" style="left:319.32px;width:100px;top:310.00px;text-align:center;transform:scaleX(0.8475);transform-origin:50% 0;font-size:7.43px;color:#e6e6e6;">200</div>
<div class="t" style="left:354.08px;width:100px;top:310.00px;text-align:center;transform:scaleX(0.8475);transform-origin:50% 0;font-size:7.43px;color:#e6e6e6;">200</div>
<div class="t" style="left:388.84px;width:100px;top:310.00px;text-align:center;transform:scaleX(0.8475);transform-origin:50% 0;font-size:7.43px;color:#e6e6e6;">200</div>
<div class="t" style="left:423.60px;width:100px;top:310.00px;text-align:center;transform:scaleX(0.8475);transform-origin:50% 0;font-size:7.43px;color:#e6e6e6;">200</div>
<div class="t" style="left:458.36px;width:100px;top:310.00px;text-align:center;transform:scaleX(0.8475);transform-origin:50% 0;font-size:7.43px;color:#e6e6e6;">200</div>
<div class="t" style="left:493.12px;width:100px;top:310.00px;text-align:center;transform:scaleX(0.8475);transform-origin:50% 0;font-size:7.43px;color:#e6e6e6;">200</div>
<div class="t" style="left:527.88px;width:100px;top:310.00px;text-align:center;transform:scaleX(0.8475);transform-origin:50% 0;font-size:7.43px;color:#e6e6e6;">200</div>
<div class="t" style="left:562.64px;width:100px;top:310.00px;text-align:center;transform:scaleX(0.8475);transform-origin:50% 0;font-size:7.43px;color:#e6e6e6;">200</div>
<div class="t" style="left:597.40px;width:100px;top:310.00px;text-align:center;transform:scaleX(0.8475);transform-origin:50% 0;font-size:7.43px;color:#e6e6e6;">200</div>
<div class="t" style="left:632.16px;width:100px;top:310.00px;text-align:center;transform:scaleX(0.8475);transform-origin:50% 0;font-size:7.43px;color:#e6e6e6;">200</div>
<div class="t" style="left:666.92px;width:100px;top:310.00px;text-align:center;transform:scaleX(0.8475);transform-origin:50% 0;font-size:7.43px;color:#e6e6e6;">200</div>
<div class="t" style="left:701.68px;width:100px;top:310.00px;text-align:center;transform:scaleX(0.8475);transform-origin:50% 0;font-size:7.43px;color:#e6e6e6;">200</div>
<div class="t" style="left:736.44px;width:100px;top:310.00px;text-align:center;transform:scaleX(0.8475);transform-origin:50% 0;font-size:7.43px;color:#e6e6e6;">200</div>
<div class="t" style="left:771.20px;width:100px;top:310.00px;text-align:center;transform:scaleX(0.8475);transform-origin:50% 0;font-size:7.43px;color:#e6e6e6;">200</div>
<div class="t" style="left:805.96px;width:100px;top:310.00px;text-align:center;transform:scaleX(0.8475);transform-origin:50% 0;font-size:7.43px;color:#e6e6e6;">200</div>
<div class="t" style="left:840.72px;width:100px;top:310.00px;text-align:center;transform:scaleX(0.8475);transform-origin:50% 0;font-size:7.43px;color:#e6e6e6;">200</div>
<div class="t" style="left:875.48px;width:100px;top:310.00px;text-align:center;transform:scaleX(0.8475);transform-origin:50% 0;font-size:7.43px;color:#e6e6e6;">200</div>
<div class="t" style="left:910.24px;width:100px;top:310.00px;text-align:center;transform:scaleX(0.8475);transform-origin:50% 0;font-size:7.43px;color:#e6e6e6;">200</div>
<div class="t" style="left:945.00px;width:100px;top:310.00px;text-align:center;transform:scaleX(0.8475);transform-origin:50% 0;font-size:7.43px;color:#e6e6e6;">200</div>
<div class="t" style="left:979.76px;width:100px;top:310.00px;text-align:center;transform:scaleX(0.8475);transform-origin:50% 0;font-size:7.43px;color:#e6e6e6;">200</div>
<div class="t" style="left:1014.52px;width:100px;top:310.00px;text-align:center;transform:scaleX(0.8475);transform-origin:50% 0;font-size:7.43px;color:#e6e6e6;">200</div>
<svg class="a" style="left:51.5px;top:328.18px" width="5" height="6" viewBox="0 0 5 6"><path d="M1.2 1 L3.2 3 L1.2 5" fill="none" stroke="#f0f0f0" stroke-width="1"/></svg>
<div class="t" style="left:60.00px;top:327.00px;transform:scaleX(0.8475);transform-origin:0 0;font-size:7.43px;color:#e6e6e6;">TSO</div>
<div class="t" style="right:845.10px;top:327.00px;text-align:right;transform:scaleX(0.8475);transform-origin:100% 0;font-size:7.43px;color:#e6e6e6;">00000</div>
<div class="t" style="left:250.10px;top:327.00px;transform:scaleX(0.8475);transform-origin:0 0;font-size:7.43px;color:#e6e6e6;">-99999</div>
<div class="t" style="left:249.80px;width:100px;top:327.00px;text-align:center;transform:scaleX(0.8475);transform-origin:50% 0;font-size:7.43px;color:#e6e6e6;">200</div>
<div class="t" style="left:284.56px;width:100px;top:327.00px;text-align:center;transform:scaleX(0.8475);transform-origin:50% 0;font-size:7.43px;color:#e6e6e6;">200</div>
<div class="t" style="left:319.32px;width:100px;top:327.00px;text-align:center;transform:scaleX(0.8475);transform-origin:50% 0;font-size:7.43px;color:#e6e6e6;">200</div>
<div class="t" style="left:354.08px;width:100px;top:327.00px;text-align:center;transform:scaleX(0.8475);transform-origin:50% 0;font-size:7.43px;color:#e6e6e6;">200</div>
<div class="t" style="left:388.84px;width:100px;top:327.00px;text-align:center;transform:scaleX(0.8475);transform-origin:50% 0;font-size:7.43px;color:#e6e6e6;">200</div>
<div class="t" style="left:423.60px;width:100px;top:327.00px;text-align:center;transform:scaleX(0.8475);transform-origin:50% 0;font-size:7.43px;color:#e6e6e6;">200</div>
<div class="t" style="left:458.36px;width:100px;top:327.00px;text-align:center;transform:scaleX(0.8475);transform-origin:50% 0;font-size:7.43px;color:#e6e6e6;">200</div>
<div class="t" style="left:493.12px;width:100px;top:327.00px;text-align:center;transform:scaleX(0.8475);transform-origin:50% 0;font-size:7.43px;color:#e6e6e6;">200</div>
<div class="t" style="left:527.88px;width:100px;top:327.00px;text-align:center;transform:scaleX(0.8475);transform-origin:50% 0;font-size:7.43px;color:#e6e6e6;">200</div>
<div class="t" style="left:562.64px;width:100px;top:327.00px;text-align:center;transform:scaleX(0.8475);transform-origin:50% 0;font-size:7.43px;color:#e6e6e6;">200</div>
<div class="t" style="left:597.40px;width:100px;top:327.00px;text-align:center;transform:scaleX(0.8475);transform-origin:50% 0;font-size:7.43px;color:#e6e6e6;">200</div>
<div class="t" style="left:632.16px;width:100px;top:327.00px;text-align:center;transform:scaleX(0.8475);transform-origin:50% 0;font-size:7.43px;color:#e6e6e6;">200</div>
<div class="t" style="left:666.92px;width:100px;top:327.00px;text-align:center;transform:scaleX(0.8475);transform-origin:50% 0;font-size:7.43px;color:#e6e6e6;">200</div>
<div class="t" style="left:701.68px;width:100px;top:327.00px;text-align:center;transform:scaleX(0.8475);transform-origin:50% 0;font-size:7.43px;color:#e6e6e6;">200</div>
<div class="t" style="left:736.44px;width:100px;top:327.00px;text-align:center;transform:scaleX(0.8475);transform-origin:50% 0;font-size:7.43px;color:#e6e6e6;">200</div>
<div class="t" style="left:771.20px;width:100px;top:327.00px;text-align:center;transform:scaleX(0.8475);transform-origin:50% 0;font-size:7.43px;color:#e6e6e6;">200</div>
<div class="t" style="left:805.96px;width:100px;top:327.00px;text-align:center;transform:scaleX(0.8475);transform-origin:50% 0;font-size:7.43px;color:#e6e6e6;">200</div>
<div class="t" style="left:840.72px;width:100px;top:327.00px;text-align:center;transform:scaleX(0.8475);transform-origin:50% 0;font-size:7.43px;color:#e6e6e6;">200</div>
<div class="t" style="left:875.48px;width:100px;top:327.00px;text-align:center;transform:scaleX(0.8475);transform-origin:50% 0;font-size:7.43px;color:#e6e6e6;">200</div>
<div class="t" style="left:910.24px;width:100px;top:327.00px;text-align:center;transform:scaleX(0.8475);transform-origin:50% 0;font-size:7.43px;color:#e6e6e6;">200</div>
<div class="t" style="left:945.00px;width:100px;top:327.00px;text-align:center;transform:scaleX(0.8475);transform-origin:50% 0;font-size:7.43px;color:#e6e6e6;">200</div>
<div class="t" style="left:979.76px;width:100px;top:327.00px;text-align:center;transform:scaleX(0.8475);transform-origin:50% 0;font-size:7.43px;color:#e6e6e6;">200</div>
<div class="t" style="left:1014.52px;width:100px;top:327.00px;text-align:center;transform:scaleX(0.8475);transform-origin:50% 0;font-size:7.43px;color:#e6e6e6;">200</div>
<div class="a" style="left:1061px;top:163px;width:11px;height:176.5px;background:rgba(36,36,36,0.72);"></div>
<div class="a" style="left:1061px;top:339.5px;width:12px;height:380.5px;background:#1f1f1f;"></div>
<div class="a" style="left:1065px;top:168px;width:3.8px;height:552px;background:#666666;border-radius:2px 2px 0 0"></div>
<div class="a" style="left:130.7px;top:96.5px;width:302.3px;height:190.5px;background:#262626;border-radius:2px;box-shadow:0 1px 3px rgba(0,0,0,0.5)"></div>
<div class="a" style="left:131.7px;top:97.5px;width:134.10000000000002px;height:65px;background:#3d3d3d;"></div>
<svg class="a" style="left:134.60px;top:102.00px" width="7.60" height="7.60" viewBox="0 0 8 8"><path d="M4 0.3 L5.05 2.9 L7.8 3.05 L5.7 4.8 L6.35 7.5 L4 6 L1.65 7.5 L2.3 4.8 L0.2 3.05 L2.95 2.9Z" fill="#f5d21e"/></svg>
<div class="t" style="left:145.70px;top:103.00px;transform:scaleX(0.8475);transform-origin:0 0;font-size:7.85px;color:#d2d2d2;">BeNeLux EDF Hedge</div>
<svg class="a" style="left:257px;top:102.80px" width="5" height="6" viewBox="0 0 5 6"><path d="M1.2 0.8 L3.5 3 L1.2 5.2" fill="none" stroke="#d2d2d2" stroke-width="0.9"/></svg>
<div class="a" style="left:131.7px;top:113.4px;width:134.10000000000002px;height:16.9px;background:#2b92db;"></div>
<svg class="a" style="left:134.60px;top:118.10px" width="7.60" height="7.60" viewBox="0 0 8 8"><path d="M4 0.3 L5.05 2.9 L7.8 3.05 L5.7 4.8 L6.35 7.5 L4 6 L1.65 7.5 L2.3 4.8 L0.2 3.05 L2.95 2.9Z" fill="#f5d21e"/></svg>
<div class="t" style="left:145.70px;top:119.00px;transform:scaleX(0.8475);transform-origin:0 0;font-size:7.87px;color:#ffffff;">CET-All Books</div>
<svg class="a" style="left:257px;top:118.90px" width="5" height="6" viewBox="0 0 5 6"><path d="M1.2 0.8 L3.5 3 L1.2 5.2" fill="none" stroke="#ffffff" stroke-width="0.9"/></svg>
<svg class="a" style="left:134.60px;top:134.50px" width="7.60" height="7.60" viewBox="0 0 8 8"><path d="M4 0.3 L5.05 2.9 L7.8 3.05 L5.7 4.8 L6.35 7.5 L4 6 L1.65 7.5 L2.3 4.8 L0.2 3.05 L2.95 2.9Z" fill="#f5d21e"/></svg>
<div class="t" style="left:145.70px;top:135.00px;transform:scaleX(0.8475);transform-origin:0 0;font-size:7.35px;color:#d2d2d2;">CET-DO NOT DELETE!</div>
<svg class="a" style="left:257px;top:135.30px" width="5" height="6" viewBox="0 0 5 6"><path d="M1.2 0.8 L3.5 3 L1.2 5.2" fill="none" stroke="#d2d2d2" stroke-width="0.9"/></svg>
<svg class="a" style="left:134.60px;top:150.75px" width="7.60" height="7.60" viewBox="0 0 8 8"><path d="M4 0.3 L5.05 2.9 L7.8 3.05 L5.7 4.8 L6.35 7.5 L4 6 L1.65 7.5 L2.3 4.8 L0.2 3.05 L2.95 2.9Z" fill="#f5d21e"/></svg>
<div class="t" style="left:145.70px;top:152.00px;transform:scaleX(0.8475);transform-origin:0 0;font-size:7.14px;color:#d2d2d2;">EDF GRID LOSSES</div>
<svg class="a" style="left:257px;top:151.55px" width="5" height="6" viewBox="0 0 5 6"><path d="M1.2 0.8 L3.5 3 L1.2 5.2" fill="none" stroke="#d2d2d2" stroke-width="0.9"/></svg>
<div class="a" style="left:131.7px;top:162.5px;width:134.10000000000002px;height:3px;background:#2c2c2c;"></div>
<div class="a" style="left:131.7px;top:165.5px;width:134.10000000000002px;height:102px;background:#424242;"></div>
<div class="a" style="left:255.5px;top:165.5px;width:9.3px;height:102px;background:#3a3a3a;"></div>
<div class="a" style="left:258px;top:171.5px;width:5px;height:57px;background:#565656;border-radius:2px"></div>
<svg class="a" style="left:134.70px;top:170.60px" width="7.60" height="7.60" viewBox="0 0 8 8"><path d="M4 0.3 L5.05 2.9 L7.8 3.05 L5.7 4.8 L6.35 7.5 L4 6 L1.65 7.5 L2.3 4.8 L0.2 3.05 L2.95 2.9Z" fill="#262626"/></svg>
<div class="t" style="left:145.80px;top:171.00px;transform:scaleX(0.8475);transform-origin:0 0;font-size:7.86px;color:#d6d6d6;">All</div>
<svg class="a" style="left:257.3px;top:171.40px" width="5" height="6" viewBox="0 0 5 6"><path d="M1.2 0.8 L3.5 3 L1.2 5.2" fill="none" stroke="#7a7a7a" stroke-width="0.9"/></svg>
<svg class="a" style="left:134.70px;top:188.23px" width="7.60" height="7.60" viewBox="0 0 8 8"><path d="M4 0.3 L5.05 2.9 L7.8 3.05 L5.7 4.8 L6.35 7.5 L4 6 L1.65 7.5 L2.3 4.8 L0.2 3.05 L2.95 2.9Z" fill="#262626"/></svg>
<div class="t" style="left:145.80px;top:189.00px;transform:scaleX(0.8475);transform-origin:0 0;font-size:7.56px;color:#d6d6d6;">BC+BD+B3+PK+PV</div>
<svg class="a" style="left:257.3px;top:189.03px" width="5" height="6" viewBox="0 0 5 6"><path d="M1.2 0.8 L3.5 3 L1.2 5.2" fill="none" stroke="#7a7a7a" stroke-width="0.9"/></svg>
<svg class="a" style="left:134.70px;top:205.86px" width="7.60" height="7.60" viewBox="0 0 8 8"><path d="M4 0.3 L5.05 2.9 L7.8 3.05 L5.7 4.8 L6.35 7.5 L4 6 L1.65 7.5 L2.3 4.8 L0.2 3.05 L2.95 2.9Z" fill="#262626"/></svg>
<div class="t" style="left:145.80px;top:207.00px;transform:scaleX(0.8475);transform-origin:0 0;font-size:8.00px;color:#d6d6d6;">BeNeDen Check</div>
<svg class="a" style="left:257.3px;top:206.66px" width="5" height="6" viewBox="0 0 5 6"><path d="M1.2 0.8 L3.5 3 L1.2 5.2" fill="none" stroke="#7a7a7a" stroke-width="0.9"/></svg>
<svg class="a" style="left:134.70px;top:223.49px" width="7.60" height="7.60" viewBox="0 0 8 8"><path d="M4 0.3 L5.05 2.9 L7.8 3.05 L5.7 4.8 L6.35 7.5 L4 6 L1.65 7.5 L2.3 4.8 L0.2 3.05 L2.95 2.9Z" fill="#262626"/></svg>
<div class="t" style="left:145.80px;top:224.00px;transform:scaleX(0.8475);transform-origin:0 0;font-size:8.00px;color:#d6d6d6;">BeNeLux</div>
<svg class="a" style="left:257.3px;top:224.29px" width="5" height="6" viewBox="0 0 5 6"><path d="M1.2 0.8 L3.5 3 L1.2 5.2" fill="none" stroke="#7a7a7a" stroke-width="0.9"/></svg>
<svg class="a" style="left:134.70px;top:241.12px" width="7.60" height="7.60" viewBox="0 0 8 8"><path d="M4 0.3 L5.05 2.9 L7.8 3.05 L5.7 4.8 L6.35 7.5 L4 6 L1.65 7.5 L2.3 4.8 L0.2 3.05 L2.95 2.9Z" fill="#262626"/></svg>
<div class="t" style="left:145.80px;top:242.00px;transform:scaleX(0.8475);transform-origin:0 0;font-size:7.82px;color:#d6d6d6;">BeNeLux EDF Hedge</div>
<svg class="a" style="left:257.3px;top:241.92px" width="5" height="6" viewBox="0 0 5 6"><path d="M1.2 0.8 L3.5 3 L1.2 5.2" fill="none" stroke="#7a7a7a" stroke-width="0.9"/></svg>
<svg class="a" style="left:134.70px;top:258.75px" width="7.60" height="7.60" viewBox="0 0 8 8"><path d="M4 0.3 L5.05 2.9 L7.8 3.05 L5.7 4.8 L6.35 7.5 L4 6 L1.65 7.5 L2.3 4.8 L0.2 3.05 L2.95 2.9Z" fill="#262626"/></svg>
<div class="t" style="left:145.80px;top:259.00px;transform:scaleX(0.8475);transform-origin:0 0;font-size:7.50px;color:#d6d6d6;">BL&amp;S1</div>
<svg class="a" style="left:257.3px;top:259.55px" width="5" height="6" viewBox="0 0 5 6"><path d="M1.2 0.8 L3.5 3 L1.2 5.2" fill="none" stroke="#7a7a7a" stroke-width="0.9"/></svg>
<div class="a" style="left:265.8px;top:97.5px;width:166.2px;height:17.5px;background:#3d3d3d;"></div>
<div class="a" style="left:265.8px;top:115px;width:166.2px;height:1px;background:#2d2d2d;"></div>
<div class="a" style="left:265.8px;top:116px;width:166.2px;height:151.5px;background:#333333;"></div>
<div class="t" style="left:271.70px;top:105.00px;transform-origin:0 0;font-size:8.20px;color:#e8e8e8;">All</div>
<div class="t" style="left:272.30px;top:124.00px;transform:scaleX(0.8475);transform-origin:0 0;font-size:7.54px;color:#b4b4b4;">Delivery Points:</div>
<div class="a" style="left:326.5px;top:126.80px;width:1.9px;height:1.9px;border-radius:50%;background:#dcdcdc"></div>
<div class="t" style="left:331.80px;top:125.00px;transform:scaleX(0.8475);transform-origin:0 0;font-size:6.17px;color:#e2e2e2;">APG_TSO,BULG_TSO,CRO_TSO,C</div>
<div class="t" style="left:331.80px;top:135.00px;transform:scaleX(0.8475);transform-origin:0 0;font-size:6.17px;color:#e2e2e2;">EPS_TSO,EON_TSO</div>
<div class="a" style="left:326.5px;top:148.30px;width:1.9px;height:1.9px;border-radius:50%;background:#dcdcdc"></div>
<div class="t" style="left:331.80px;top:146.00px;transform:scaleX(0.8475);transform-origin:0 0;font-size:6.17px;color:#e2e2e2;">VEAG_TSO,UKR_HU,UKR_ROM,U</div>
<div class="t" style="left:331.80px;top:157.00px;transform:scaleX(0.8475);transform-origin:0 0;font-size:6.17px;color:#e2e2e2;">KR_SK,SEPS_TSO</div>
<div class="a" style="left:326.5px;top:169.80px;width:1.9px;height:1.9px;border-radius:50%;background:#dcdcdc"></div>
<div class="t" style="left:331.80px;top:168.00px;transform:scaleX(0.8475);transform-origin:0 0;font-size:6.17px;color:#e2e2e2;">SERB_TSO,SLO_TSO,SLO_SEPS,R</div>
<div class="t" style="left:331.80px;top:178.00px;transform:scaleX(0.8475);transform-origin:0 0;font-size:6.17px;color:#e2e2e2;">OM_TSO</div>
<div class="a" style="left:326.5px;top:191.30px;width:1.9px;height:1.9px;border-radius:50%;background:#dcdcdc"></div>
<div class="t" style="left:331.80px;top:189.00px;transform:scaleX(0.8475);transform-origin:0 0;font-size:6.17px;color:#e2e2e2;">PSE_TSO,MAVIR,HU_RO,HU_HR,H</div>
<div class="t" style="left:331.80px;top:200.00px;transform:scaleX(0.8475);transform-origin:0 0;font-size:6.17px;color:#e2e2e2;">R_SLOV</div>
<div class="t" style="left:272.30px;top:214.00px;transform:scaleX(0.8475);transform-origin:0 0;font-size:7.32px;color:#bdbdbd;">Profit Centres:</div>
<div class="t" style="left:323.30px;top:214.00px;transform:scaleX(0.8475);transform-origin:0 0;font-size:7.32px;color:#e2e2e2;">All</div>
<div class="t" style="left:272.30px;top:228.00px;transform:scaleX(0.8475);transform-origin:0 0;font-size:7.32px;color:#bdbdbd;">Customer:</div>
<div class="t" style="left:323.30px;top:228.00px;transform:scaleX(0.8475);transform-origin:0 0;font-size:7.32px;color:#e2e2e2;">All</div>
<div class="t" style="left:272.30px;top:242.00px;transform:scaleX(0.8475);transform-origin:0 0;font-size:7.32px;color:#bdbdbd;">Granularity:</div>
<div class="t" style="left:323.30px;top:242.00px;transform:scaleX(0.8475);transform-origin:0 0;font-size:7.32px;color:#e2e2e2;">Intraday</div>
<div class="t" style="left:272.30px;top:255.00px;transform:scaleX(0.8475);transform-origin:0 0;font-size:7.32px;color:#bdbdbd;">Grouping:</div>
<div class="t" style="left:323.30px;top:255.00px;transform:scaleX(0.8475);transform-origin:0 0;font-size:7.32px;color:#e2e2e2;">All</div>
<div class="a" style="left:131.7px;top:267.5px;width:300.3px;height:18px;background:#5e5e5e;border-radius:0 0 2px 2px"></div>
<div class="a" style="left:400.9px;top:271px;width:22.8px;height:11px;background:#2b92db;border-radius:2px"></div>
<div class="t" style="left:362.30px;width:100px;top:273.00px;text-align:center;transform:scaleX(0.8475);transform-origin:50% 0;font-size:7.32px;color:#ffffff;">Apply</div>
<svg class="a" style="left:429px;top:102.2px" width="14" height="14" viewBox="0 0 14 14"><circle cx="7" cy="7" r="5.2" fill="#1e1e1e"/><circle cx="7" cy="7" r="4.2" fill="#262626" stroke="#e8e8e8" stroke-width="1.2"/><path d="M7 7 V3.9 A3.1 3.1 0 0 1 10.1 7Z" fill="#e8e8e8"/></svg>
<svg class="a" style="left:255px;top:115px" width="40" height="40" viewBox="255 115 40 40"><path d="M264 124.5 L270.2 147 L274.6 140.6 L280.6 147.6 L283.4 145.2 L277.6 138.4 L285.4 135.6 Z" fill="#000" stroke="#fff" stroke-width="1.5" stroke-linejoin="miter"/></svg>
</body></html>
